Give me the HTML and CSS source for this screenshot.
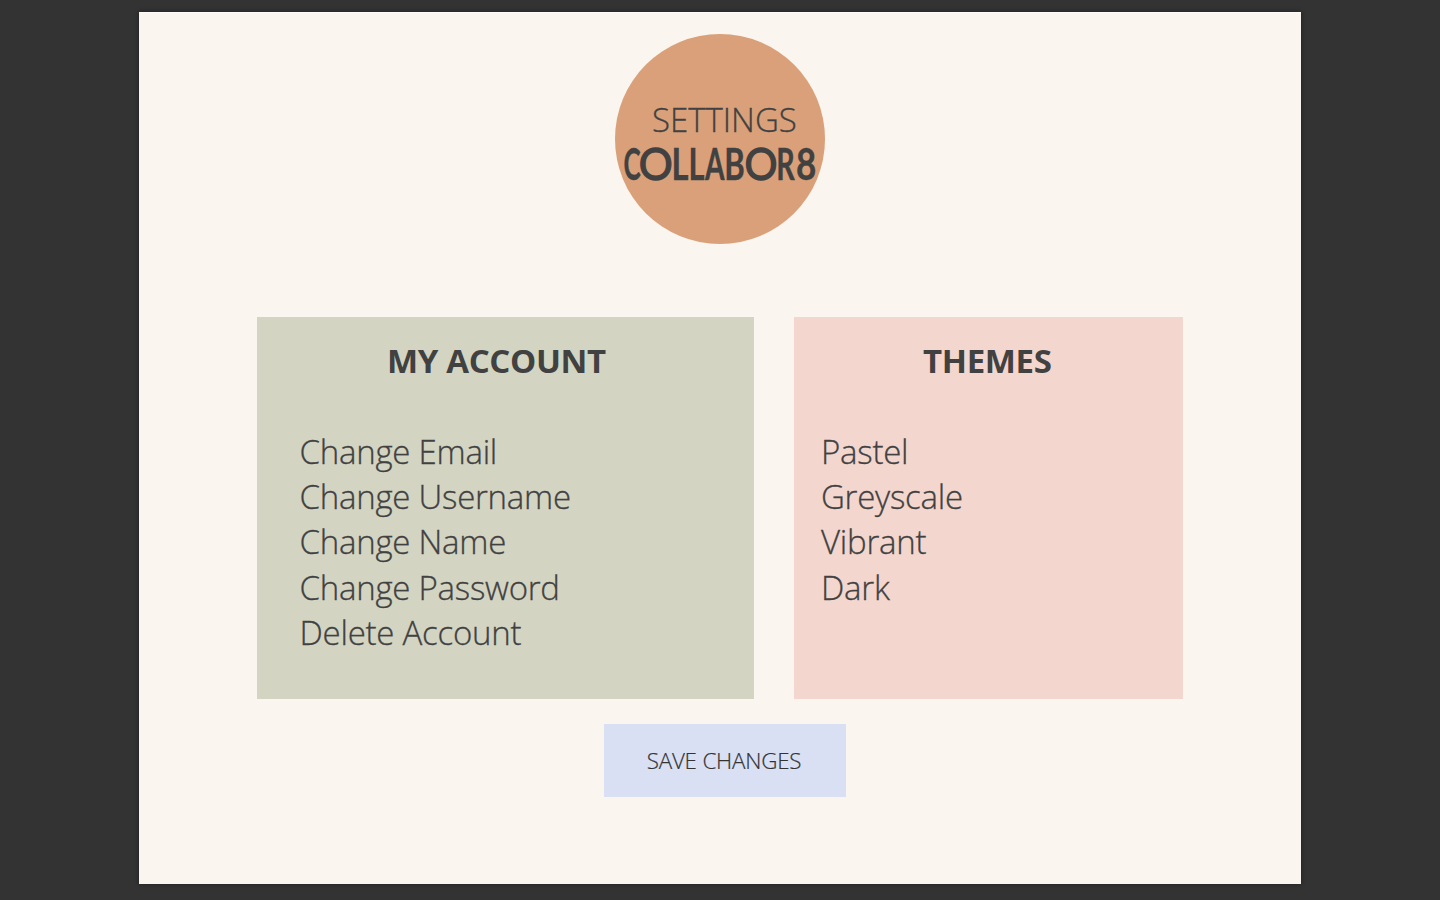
FILE: index.html
```html
<!DOCTYPE html>
<html lang="en">
<head>
<meta charset="utf-8">
<title>Collabor8 Settings</title>
<link rel="stylesheet" href="styles.css">
</head>
<body>
<main class="page">
  <header class="badge">
    <h1 class="badge-title">SETTINGS</h1>
    <div class="brand"><svg class="brand-svg" viewBox="0 0 194 50"><text class="brand-text" y="38"><tspan x="0.6" textLength="17.2" lengthAdjust="spacingAndGlyphs">C</tspan><tspan class="round" x="15.8" textLength="34" lengthAdjust="spacingAndGlyphs">O</tspan><tspan x="48.5" textLength="17" lengthAdjust="spacingAndGlyphs">L</tspan><tspan x="65.5" textLength="16" lengthAdjust="spacingAndGlyphs">L</tspan><tspan x="82" textLength="19.5" lengthAdjust="spacingAndGlyphs">A</tspan><tspan x="101.2" textLength="20.5" lengthAdjust="spacingAndGlyphs">B</tspan><tspan class="round" x="121.5" textLength="33" lengthAdjust="spacingAndGlyphs">O</tspan><tspan x="153.2" textLength="18.5" lengthAdjust="spacingAndGlyphs">R</tspan><tspan x="173" textLength="20.3" lengthAdjust="spacingAndGlyphs">8</tspan></text></svg></div>
  </header>
  <div class="panels">
    <section class="panel account">
      <h2 class="panel-title">MY ACCOUNT</h2>
      <ul class="options">
        <li>Change Email</li>
        <li>Change Username</li>
        <li>Change Name</li>
        <li>Change Password</li>
        <li>Delete Account</li>
      </ul>
    </section>
    <section class="panel themes">
      <h2 class="panel-title">THEMES</h2>
      <ul class="options">
        <li>Pastel</li>
        <li>Greyscale</li>
        <li>Vibrant</li>
        <li>Dark</li>
      </ul>
    </section>
  </div>
  <button class="save">SAVE CHANGES</button>
</main>
</body>
</html>
```
FILE: styles.css
```css
* { box-sizing: border-box; }
body {
  margin: 0;
  height: 900px;
  padding-top: 12px;
  overflow: hidden;
  background: #333333;
  color: #414141;
  font-family: "Open Sans", sans-serif;
  font-weight: 300;
}
.page {
  display: flex;
  flex-direction: column;
  width: 1162px;
  height: 872px;
  margin: 0 auto;
  padding-top: 21.4px;
  border-top: 1px solid #fffdfa;
  background: #faf5ee;
  box-shadow: 0 0 5px rgba(0, 0, 0, .4);
}
.badge {
  display: flex;
  flex-direction: column;
  align-items: center;
  width: 210px;
  height: 210px;
  margin-left: 475.6px;
  padding-top: 62.6px;
  border-radius: 50%;
  background: #d9a079;
}
.badge-title {
  margin: 0 0 0 9.5px;
  font-size: 33px;
  line-height: 46px;
  font-weight: 300;
  -webkit-text-stroke: .3px #414141;
}
.brand { height: 50px; margin-top: -1px; }
.brand-svg { display: block; width: 194px; height: 50px; overflow: visible; }
.brand-text {
  fill: #414141;
  stroke: #414141;
  stroke-width: .4px;
  font-family: Lato, sans-serif;
  font-size: 44.5px;
  font-weight: 700;
}
.round { font-weight: 400; stroke-width: 1.3px; }
.panels {
  display: flex;
  gap: 40px;
  margin: 72.6px 0 0 118px;
}
.panel { height: 382px; padding-top: 21px; }
.account { width: 497px; padding-left: 42.5px; background: #d3d4c1; }
.themes { width: 389px; padding-left: 27px; background: #f3d6cd; }
.panel-title {
  margin: 0;
  font-size: 33px;
  line-height: 46px;
  font-weight: 700;
  letter-spacing: -.35px;
  white-space: nowrap;
}
.account .panel-title { padding-left: 87.5px; }
.themes .panel-title { padding-left: 102px; }
.options {
  margin: 44.95px 0 0;
  padding: 0;
  list-style: none;
  font-size: 33px;
  line-height: 45.25px;
  letter-spacing: -.25px;
  -webkit-text-stroke: .3px #414141;
}
.save {
  width: 242px;
  height: 73px;
  margin: 25px 0 0 465px;
  padding: 0 2px 0 0;
  border: 0;
  background: #dae0f4;
  color: #333;
  font: 300 22.4px "Open Sans", sans-serif;
  letter-spacing: -.2px;
  -webkit-text-stroke: .2px #333;
}
```
